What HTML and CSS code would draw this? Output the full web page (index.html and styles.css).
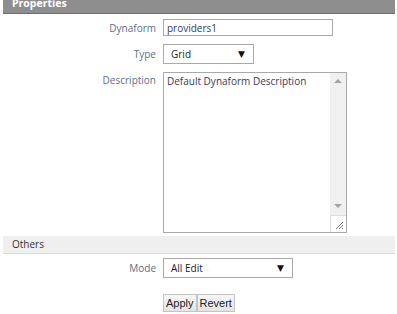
FILE: index.html
```html
<!DOCTYPE html>
<html lang="en">
<head>
  <meta charset="UTF-8" />
  <title>Dynaform Properties</title>
  <link rel="stylesheet" href="styles.css">
</head>
<body>
  <div class="panel">
    <div class="panel-title">Properties</div>
    <div class="form">
      <div class="row">
        <label class="label">Dynaform</label>
        <input class="text-input" type="text" value="providers1" />
      </div>
      <div class="row">
        <label class="label">Type</label>
        <div class="select type-select"><span>Grid</span></div>
      </div>
      <div class="row row-top">
        <label class="label">Description</label>
        <div class="desc-box">
          <textarea class="textarea">Default Dynaform Description</textarea>
          <div class="scrollbar">
            <span class="arrow arrow-up"></span>
            <span class="track"></span>
            <span class="arrow arrow-down"></span>
            <span class="grip">
              <svg width="9" height="9" viewBox="0 0 9 9">
                <path d="M1 8 L8 1 M4 8 L8 4 M7 8 L8 7" stroke="#777" stroke-width="1" fill="none" />
              </svg>
            </span>
          </div>
        </div>
      </div>
    </div>
    <div class="section-title">Others</div>
    <div class="form form-others">
      <div class="row">
        <label class="label">Mode</label>
        <div class="select mode-select"><span>All Edit</span></div>
      </div>
    </div>
    <div class="buttons">
      <button class="btn">Apply</button>
      <button class="btn">Revert</button>
    </div>
  </div>
</body>
</html>
```

FILE: styles.css
```css
body {
  margin: 0;
  padding: 0;
  background: #ffffff;
  font-family: 'Open Sans', 'DejaVu Sans', sans-serif;
  font-size: 10px;
  color: #333;
}

.panel {
  padding-left: 3px;
  width: 392px;
}

.panel-title {
  height: 13px;
  line-height: 6px;
  background-color: #8e8e8e;
  border-bottom: 1px solid #6e6e6e;
  color: #ffffff;
  font-weight: bold;
  font-size: 10.5px;
  padding-left: 9px;
  overflow: hidden;
}

.form {
  padding-top: 5px;
}

.form-others {
  padding-top: 4px;
}

.row {
  display: flex;
  align-items: center;
  gap: 7px;
  margin-bottom: 8px;
}

.row-top {
  align-items: flex-start;
  margin-bottom: 3px;
}

.label {
  width: 153px;
  text-align: right;
  color: #5e6f86;
  font-size: 10px;
}

.row-top .label {
  padding-top: 1px;
}

.text-input {
  width: 162px;
  height: 15px;
  padding: 0 3px;
  margin: 0;
  border: 1px solid #a9a9a9;
  font-family: inherit;
  font-size: 10px;
  color: #3a3a5a;
  outline: none;
}

.select {
  position: relative;
  box-sizing: border-box;
  height: 20px;
  line-height: 18px;
  border: 1px solid #a9a9a9;
  padding-left: 7px;
  color: #222;
}

.select::after {
  content: "\25BC";
  position: absolute;
  right: 8px;
  top: 0;
  font-size: 9px;
  line-height: 18px;
  color: #111;
}

.type-select {
  width: 91px;
}

.mode-select {
  width: 130px;
}

.desc-box {
  display: flex;
  width: 184px;
  height: 161px;
  box-sizing: border-box;
  border: 1px solid #a9a9a9;
}

.textarea {
  flex: 1;
  margin: 0;
  padding: 1px 3px;
  border: none;
  font-family: inherit;
  font-size: 10px;
  color: #3a3a5a;
  overflow: hidden;
  resize: none;
  outline: none;
}

.scrollbar {
  width: 16px;
  display: flex;
  flex-direction: column;
  align-items: center;
  background-color: #f0f0f0;
}

.arrow {
  width: 0;
  height: 0;
  border-left: 4px solid transparent;
  border-right: 4px solid transparent;
}

.arrow-up {
  margin-top: 6px;
  border-bottom: 4px solid #a3a3a3;
}

.arrow-down {
  margin-bottom: 7px;
  border-top: 4px solid #a3a3a3;
}

.track {
  flex: 1;
}

.grip {
  width: 16px;
  height: 17px;
  box-sizing: border-box;
  background-color: #ffffff;
  border-top: 1px solid #dddddd;
  border-left: 1px solid #dddddd;
  display: flex;
  align-items: flex-end;
  justify-content: flex-end;
  padding: 0 2px 2px 0;
}

.grip svg {
  display: block;
}

.section-title {
  height: 17px;
  line-height: 17px;
  background-color: #efefef;
  border-bottom: 1px solid #dcdcdc;
  padding-left: 9px;
  color: #333;
  font-size: 10px;
}

.buttons {
  display: flex;
  gap: 0;
  padding-left: 160px;
  margin-top: 16px;
}

.btn {
  margin: 0;
  padding: 0 2px;
  height: 18px;
  font-family: 'Liberation Sans', Arial, sans-serif;
  font-size: 11px;
  color: #222;
  background: linear-gradient(#f6f6f6, #e4e4e4);
  border: 1px solid #c4c4c4;
  border-radius: 0;
}
```
